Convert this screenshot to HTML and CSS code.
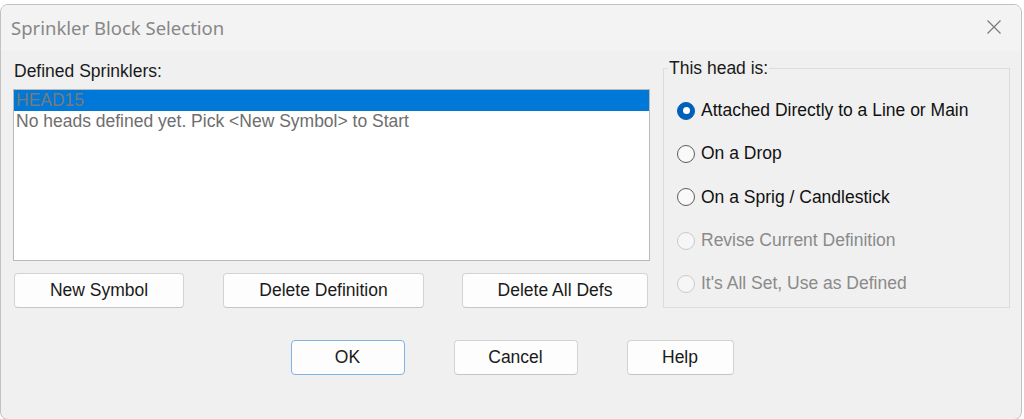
FILE: index.html
```html
<!DOCTYPE html>
<html lang="en">
<head>
    <meta charset="UTF-8">
    <title>Sprinkler Block Selection</title>
    <link rel="stylesheet" href="styles.css">
</head>
<body>
<div class="window">
    <div class="titlebar">
        <span class="title">Sprinkler Block Selection</span>
        <svg class="close" width="16" height="16" viewBox="0 0 16 16">
            <path d="M1.5 1.5 L14.5 14.5 M14.5 1.5 L1.5 14.5" stroke="#7a7a7a" stroke-width="1.2" fill="none"/>
        </svg>
    </div>

    <div class="content">
        <div class="left-col">
            <div class="label">Defined Sprinklers:</div>
            <div class="listbox">
                <div class="list-row selected">HEAD15</div>
                <div class="list-row">No heads defined yet. Pick &lt;New Symbol&gt; to Start</div>
            </div>
            <div class="button-row">
                <button class="btn btn-new">New Symbol</button>
                <button class="btn btn-delete">Delete Definition</button>
                <button class="btn btn-delete-all">Delete All Defs</button>
            </div>
        </div>

        <fieldset class="group">
            <legend>This head is:</legend>
            <div class="radio-row"><span class="radio checked"></span>Attached Directly to a Line or Main</div>
            <div class="radio-row"><span class="radio"></span>On a Drop</div>
            <div class="radio-row"><span class="radio"></span>On a Sprig / Candlestick</div>
            <div class="radio-row disabled"><span class="radio"></span>Revise Current Definition</div>
            <div class="radio-row disabled"><span class="radio"></span>It's All Set, Use as Defined</div>
        </fieldset>
    </div>

    <div class="footer">
        <button class="btn btn-ok">OK</button>
        <button class="btn btn-cancel">Cancel</button>
        <button class="btn btn-help">Help</button>
    </div>
</div>
</body>
</html>
```

FILE: styles.css
```css
body {
    margin: 0;
    padding: 0;
    background-color: #ffffff;
    font-family: "Liberation Sans", Arial, sans-serif;
    font-size: 17.5px;
    color: #1a1a1a;
}

.window {
    width: 1020px;
    height: 414px;
    margin-top: 4px;
    border: 1px solid #c2c2c2;
    border-radius: 8px;
    background-color: #f0f0f0;
    overflow: hidden;
}

.titlebar {
    height: 46px;
    background-color: #f3f3f3;
    display: flex;
    align-items: center;
    justify-content: space-between;
    padding: 0 19px 0 10px;
}

.title {
    font-family: "Noto Sans", sans-serif;
    font-size: 18.5px;
    color: #878787;
    margin-top: -2px;
}

.close {
    margin-top: -2px;
}

.content {
    display: flex;
    gap: 13px;
    padding: 8px 0 0 12px;
}

.left-col {
    width: 637px;
    margin-top: 2px;
}

.label {
    height: 20px;
    line-height: 20px;
    padding-left: 1px;
}

.listbox {
    height: 170px;
    margin-top: 8px;
    background-color: #ffffff;
    border: 1px solid #bababa;
}

.list-row {
    height: 21px;
    line-height: 21px;
    padding-left: 2px;
    color: #6e6e6e;
    white-space: nowrap;
}

.list-row.selected {
    background-color: #0078d7;
    color: #7a7a7a;
}

.button-row {
    display: flex;
    margin-top: 12px;
    padding-left: 1px;
}

.btn {
    font-family: "Liberation Sans", Arial, sans-serif;
    font-size: 17.5px;
    color: #1a1a1a;
    background-color: #fdfdfd;
    border: 1px solid #d3d3d3;
    border-bottom-color: #c6c6c6;
    border-radius: 4px;
    height: 35px;
    padding: 0;
}

.btn-new {
    width: 170px;
}

.btn-delete {
    width: 201px;
    margin-left: 39px;
}

.btn-delete-all {
    width: 186px;
    margin-left: 38px;
}

.group {
    width: 347px;
    height: 249px;
    box-sizing: border-box;
    margin: 0;
    padding: 12px 0 0 13px;
    border: 1px solid #dcdcdc;
    min-inline-size: 0;
}

.group legend {
    padding: 0 1px;
    margin-left: -9px;
    line-height: 18px;
}

.radio-row {
    height: 43.3px;
    display: flex;
    align-items: center;
    color: #111111;
    white-space: nowrap;
}

.radio {
    width: 16px;
    height: 16px;
    border: 1px solid #5c5c5c;
    border-radius: 50%;
    background-color: #f9f9f9;
    margin-right: 6px;
    box-sizing: content-box;
    position: relative;
    flex: none;
}

.radio.checked {
    background-color: #005fb8;
    border-color: #005fb8;
}

.radio.checked::after {
    content: "";
    position: absolute;
    left: 4.5px;
    top: 4.5px;
    width: 7px;
    height: 7px;
    border-radius: 50%;
    background-color: #ffffff;
}

.radio-row.disabled {
    color: #8a8a8a;
}

.radio-row.disabled .radio {
    border-color: #cacaca;
    background-color: #f6f6f6;
}

.footer {
    display: flex;
    justify-content: center;
    gap: 49px;
    margin-top: 32px;
    padding-left: 2px;
}

.btn-ok {
    width: 114px;
    height: 35px;
    border-color: #7fb2e5;
}

.btn-cancel {
    width: 124px;
}

.btn-help {
    width: 107px;
}
```
